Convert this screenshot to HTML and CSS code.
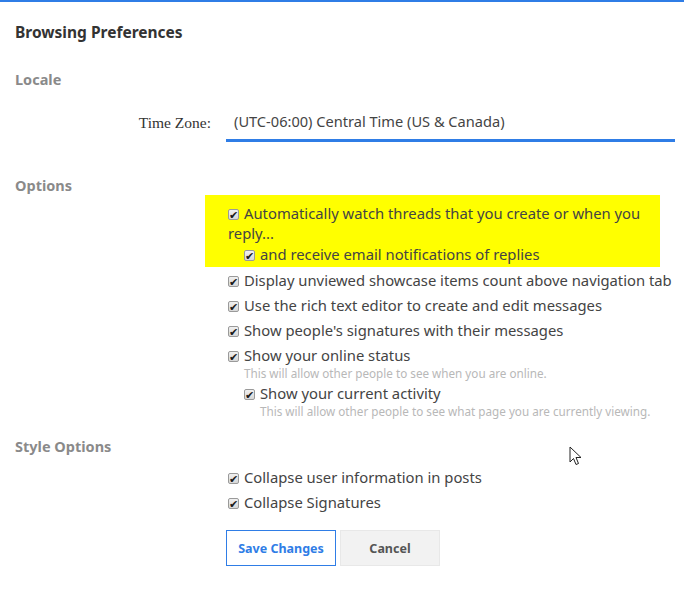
FILE: index.html
```html
<!DOCTYPE html>
<html lang="en">
<head>
  <meta charset="UTF-8" />
  <title>Browsing Preferences</title>
  <link rel="stylesheet" href="styles.css">
</head>
<body>
  <div class="prefs">
    <h2 class="prefs-title">Browsing Preferences</h2>

    <!-- Locale -->
    <h3 class="section-title">Locale</h3>
    <div class="form-row tz-row">
      <label class="row-label">Time Zone:</label>
      <div class="select">(UTC-06:00) Central Time (US &amp; Canada)</div>
    </div>

    <!-- Options -->
    <h3 class="section-title options-title">Options</h3>
    <div class="form-row">
      <div></div>
      <div class="checks">
        <div class="highlight">
          <div class="check first"><span class="box"></span>Automatically watch threads that you create or when you reply...</div>
          <div class="check sub"><span class="box"></span>and receive email notifications of replies</div>
        </div>
        <div class="check"><span class="box"></span>Display unviewed showcase items count above navigation tab</div>
        <div class="check"><span class="box"></span>Use the rich text editor to create and edit messages</div>
        <div class="check"><span class="box"></span>Show people's signatures with their messages</div>
        <div class="check with-hint"><span class="box"></span>Show your online status</div>
        <p class="hint">This will allow other people to see when you are online.</p>
        <div class="check sub with-hint"><span class="box"></span>Show your current activity</div>
        <p class="hint sub-hint">This will allow other people to see what page you are currently viewing.</p>
      </div>
    </div>

    <!-- Style Options -->
    <h3 class="section-title style-title">Style Options</h3>
    <div class="form-row">
      <div></div>
      <div class="checks style-checks">
        <div class="check"><span class="box"></span>Collapse user information in posts</div>
        <div class="check"><span class="box"></span>Collapse Signatures</div>
        <div class="buttons">
          <button class="btn btn-save">Save Changes</button>
          <button class="btn btn-cancel">Cancel</button>
        </div>
      </div>
    </div>
  </div>

  <!-- mouse pointer from the screenshot -->
  <svg class="cursor" width="14" height="22" viewBox="0 0 14 22">
    <path d="M1 1 L1 16 L4.5 12.5 L7 18.5 L9.5 17.5 L7 11.5 L12 11.5 Z" fill="#fff" stroke="#222" stroke-width="1" stroke-linejoin="round"/>
  </svg>
</body>
</html>
```

FILE: styles.css
```css
/* Reset e base */
* { margin: 0; padding: 0; box-sizing: border-box; }
body {
  font-family: 'Noto Sans', 'Open Sans', sans-serif;
  color: #333;
  background: #fff;
  border-top: 2px solid #2f7de6;
}
.prefs {
  padding: 20px 9px 0 15px;
}
.prefs-title {
  font-size: 15.5px;
  font-weight: 700;
  color: #333;
  line-height: 20px;
  margin-bottom: 27px;
}
.section-title {
  font-size: 14.5px;
  font-weight: 700;
  color: #8a8a8a;
  line-height: 20px;
}
.form-row {
  display: grid;
  grid-template-columns: 196px 1fr;
  column-gap: 15px;
}
.tz-row {
  margin-top: 22px;
  align-items: center;
}
.row-label {
  font-family: 'Liberation Serif', serif;
  font-size: 15.5px;
  text-align: right;
  color: #333;
  padding-bottom: 8px;
}
.select {
  font-size: 14.6px;
  color: #444;
  padding: 0 8px 8px;
  line-height: 20px;
  border-bottom: 3px solid #2f7de6;
}
.options-title { margin-top: 33px; }
.checks {
  padding-left: 2px;
  font-size: 14.8px;
  line-height: 20px;
  color: #444;
}
.highlight {
  background: #ffff00;
  margin: 0 15px 0 -23px;
  padding: 8px 0 3px 23px;
}
.check { margin-bottom: 5px; }
.check.first { margin-bottom: 1px; }
.highlight .check:last-child { margin-bottom: 0; }
.highlight + .check { margin-top: 3px; }
.check.sub { padding-left: 16px; }
.check.with-hint { margin-bottom: 0; }
.box {
  display: inline-block;
  vertical-align: -1px;
  width: 11px;
  height: 11px;
  margin-right: 5px;
  border: 1px solid #9a9a9a;
  border-radius: 2px;
  background: linear-gradient(#f0f0f0, #d8d8d8);
  position: relative;
}
.box::after {
  content: '\2714';
  position: absolute;
  left: 0;
  top: -5px;
  font-size: 10.5px;
  line-height: 20px;
  color: #1a1a1a;
}
.hint {
  font-size: 11.7px;
  color: #b8b8b8;
  line-height: 16px;
  padding-left: 16px;
  margin-bottom: 2px;
}
.sub-hint { padding-left: 32px; }
.style-title { margin-top: 15px; }
.style-checks { margin-top: 11px; }
.buttons {
  display: flex;
  gap: 4px;
  margin-top: 18px;
  margin-left: -2px;
}
.btn {
  height: 36px;
  font-family: 'Noto Sans', 'Open Sans', sans-serif;
  font-size: 12.5px;
  font-weight: 700;
  cursor: pointer;
}
.btn-save {
  width: 110px;
  background: #fff;
  border: 1px solid #2f7de6;
  color: #2f7de6;
}
.btn-cancel {
  width: 100px;
  background: #f2f2f2;
  border: 1px solid #e8e8e8;
  color: #555;
}
.cursor {
  position: absolute;
  left: 569px;
  top: 446px;
}
```
